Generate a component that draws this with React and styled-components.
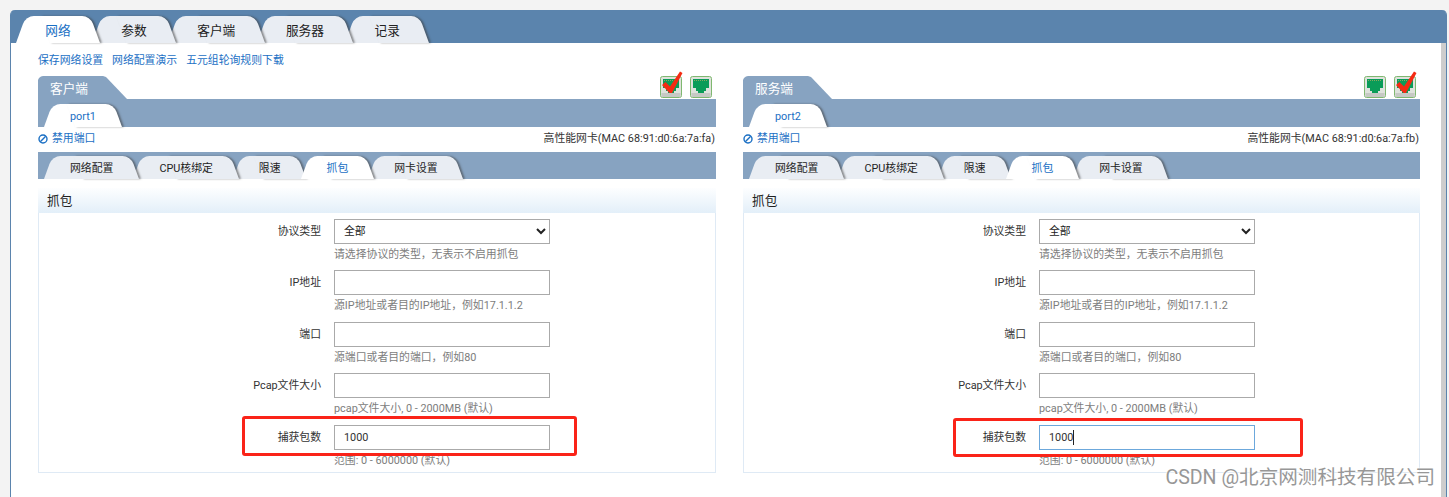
import React from "react";
import styled, { createGlobalStyle } from "styled-components";

const Global = createGlobalStyle`
  html, body { margin: 0; padding: 0; height: 497px; overflow: hidden; background: #f3f3f3; }
  body { font-family: Roboto, "Noto Sans CJK SC", sans-serif; font-size: 10.85px; color: #333; }
  #root { height: 497px; }
`;

const Page = styled.div`
  position: relative;
  height: 497px;
  padding: 10px 2px 0 10px;
  box-sizing: border-box;
  overflow: hidden;
`;
const Card = styled.div`
  display: flex;
  flex-direction: column;
  height: 487px;
  background: #fff;
  border-left: 1px solid #5b84ad;
  border-right: 1px solid #5b84ad;
  border-radius: 5px 5px 0 0;
`;
const MainStrip = styled.div`
  display: flex;
  flex: none;
  align-items: flex-end;
  height: 33px;
  padding-left: 5px;
  background: #5b84ad;
  border-radius: 4px 4px 0 0;
`;
const Body = styled.div`
  display: flex;
  flex: 1;
  min-height: 0;
`;
const ScrollThumb = styled.div`
  width: 5px;
  flex: none;
  background: #cdcdcd;
`;
const Tab = styled.div`
  position: relative;
  height: ${(p) => p.$h}px;
  line-height: ${(p) => p.$h + 2}px;
  padding: 0 ${(p) => p.$pad}px;
  font-size: ${(p) => p.$fs}px;
  color: ${(p) => (p.$active ? "#1a6fc4" : "#222")};
  white-space: nowrap;
  flex: none;
  z-index: ${(p) => (p.$active ? 20 : p.$z)};
  &:not(:first-child) { margin-left: ${(p) => p.$overlap}px; }
  &::before, &::after {
    content: "";
    position: absolute;
    top: 0;
    bottom: 0;
    width: 60%;
    background: ${(p) => (p.$active ? "#fff" : "#e9edf3")};
    transform-origin: bottom;
    z-index: -1;
  }
  &::before {
    left: 0;
    transform: skewX(-20deg);
    border-top-left-radius: 8px;
  }
  &::after {
    right: 0;
    transform: skewX(20deg);
    border-top-right-radius: 8px;
    box-shadow: 2px 0 2px rgba(60, 60, 60, 0.55);
  }
`;
const Content = styled.div`
  flex: 1;
  min-width: 0;
  padding: 0 21px 0 27px;
`;
const LinkRow = styled.div`
  display: flex;
  gap: 9px;
  height: 33px;
  line-height: 35px;
`;
const Link = styled.span`
  color: #1a6fc4;
`;
const Panels = styled.div`
  display: grid;
  grid-template-columns: 678px 677px;
  column-gap: 27px;
`;
const Panel = styled.div`
  min-width: 0;
`;
const PanelTop = styled.div`
  display: flex;
  justify-content: space-between;
  height: 23px;
`;
const PanelTitle = styled.div`
  width: 89px;
  height: 23px;
  box-sizing: border-box;
  padding-left: 12px;
  line-height: 26px;
  font-size: 12.7px;
  color: #fff;
  background: #87a3c1;
  clip-path: polygon(0 4px, 1px 2px, 3px 0.5px, 5px 0, 65px 0, 68px 1px, 89px 23px, 0 23px);
`;
const IconGroup = styled.div`
  display: flex;
  gap: 8px;
  padding-right: 4px;
`;
const PortBar = styled.div`
  display: flex;
  align-items: flex-end;
  height: 28px;
  padding-left: 6px;
  background: #87a3c1;
`;
const InfoRow = styled.div`
  display: flex;
  justify-content: space-between;
  align-items: flex-start;
  height: 25px;
  padding-top: 4px;
  box-sizing: border-box;
  line-height: 16px;
`;
const Disable = styled.span`
  display: flex;
  align-items: center;
  gap: 4px;
  color: #1a6fc4;
`;
const Mac = styled.span`
  color: #333;
  padding-right: 1px;
`;
const SubBar = styled.div`
  display: flex;
  align-items: flex-end;
  height: 27px;
  padding-left: 6px;
  background: #87a3c1;
`;
const Section = styled.div`
  margin-top: 9px;
  height: 285px;
  box-sizing: border-box;
  border: 1px solid #dfeaf5;
  border-top: none;
`;
const SectionHead = styled.div`
  height: 25px;
  margin: 0 -1px;
  padding-left: 9px;
  line-height: 26px;
  font-size: 12.7px;
  color: #222;
  background: linear-gradient(#fdfeff, #e3eff9);
`;
const Form = styled.div`
  padding-top: 5.5px;
`;
const Row = styled.div`
  display: grid;
  grid-template-columns: 282px 216px;
  column-gap: 13px;
  height: 51.5px;
`;
const Label = styled.div`
  text-align: right;
  line-height: 26px;
  color: #333;
`;
const Field = styled.div`
  position: relative;
  min-width: 0;
`;
const Input = styled.input`
  display: block;
  width: 216px;
  height: 25px;
  box-sizing: border-box;
  padding: 1px 9px 0;
  border: 1px solid ${(p) => (p.$focus ? "#6ca8dc" : "#aaa")};
  border-radius: 0;
  outline: none;
  background: #fff;
  font: 10.85px Roboto, "Noto Sans CJK SC", sans-serif;
  color: #333;
`;
const Caret = styled.i`
  position: absolute;
  left: 34px;
  top: 5px;
  width: 1px;
  height: 15px;
  background: #222;
`;
const Select = styled.select`
  display: block;
  width: 216px;
  height: 25px;
  box-sizing: border-box;
  padding: 0 5px;
  border: 1px solid #aaa;
  border-radius: 0;
  outline: none;
  background: #fff;
  font: 10.85px Roboto, "Noto Sans CJK SC", sans-serif;
  color: #222;
`;
const Hint = styled.div`
  line-height: 21px;
  white-space: nowrap;
  color: #7d7d7d;
`;
const RedBox = styled.div`
  position: absolute;
  left: ${(p) => p.$x}px;
  top: ${(p) => p.$y}px;
  width: ${(p) => p.$w}px;
  height: ${(p) => p.$h}px;
  box-sizing: border-box;
  border: 3px solid #fa2318;
  border-radius: 3px;
  pointer-events: none;
`;
const Watermark = styled.div`
  position: absolute;
  right: 14px;
  top: 466px;
  font-size: 19.6px;
  line-height: 24px;
  white-space: nowrap;
  color: #979797;
  text-shadow: 0 0 2px #fff, 0 0 2px #fff;
`;
const IconSvg = styled.svg`
  display: block;
  overflow: visible;
`;

const PortIcon = ({ checked }) => (
  <IconSvg width="22" height="22" viewBox="0 0 22 22">
    <rect x="0.5" y="0.5" width="21" height="21" rx="2" fill="#dfe2dc" stroke="#7fb870" />
    <rect x="1.5" y="17" width="19" height="4" fill="#c6c9c4" />
    <path d="M3 3h16v9h-3v3h-2v2H8v-2H6v-3H3z" fill="#0a9c58" />
    <path d="M4 4.5h14" stroke="#8aa85e" strokeWidth="1.2" strokeDasharray="1 1" />
    {checked && (
      <path d="M2 9L5.5 6 10 10.5 20 -4.5 22.5 -3 12 17 9.5 17z" fill="#f42a12" />
    )}
  </IconSvg>
);
const BanIcon = () => (
  <svg width="10" height="10" viewBox="0 0 10 10">
    <circle cx="5" cy="5" r="4" fill="none" stroke="#1a6fc4" strokeWidth="1.4" />
    <path d="M2.3 7.7L7.7 2.3" stroke="#1a6fc4" strokeWidth="1.4" />
  </svg>
);

const mainTabs = ["网络", "参数", "客户端", "服务器", "记录"];
const subTabs = ["网络配置", "CPU核绑定", "限速", "抓包", "网卡设置"];
const formRows = [
  { label: "协议类型", hint: "请选择协议的类型，无表示不启用抓包", select: true },
  { label: "IP地址", hint: "源IP地址或者目的IP地址，例如17.1.1.2" },
  { label: "端口", hint: "源端口或者目的端口，例如80" },
  { label: "Pcap文件大小", hint: "pcap文件大小, 0 - 2000MB (默认)" },
  { label: "捕获包数", hint: "范围: 0 - 6000000 (默认)", value: "1000" },
];

const PortPanel = ({ title, port, mac, iconsChecked, focus }) => (
  <Panel>
    <PanelTop>
      <PanelTitle>{title}</PanelTitle>
      <IconGroup>
        {iconsChecked.map((c, i) => (
          <PortIcon key={i} checked={c} />
        ))}
      </IconGroup>
    </PanelTop>
    <PortBar>
      <Tab $active $h={23} $pad={26} $fs={10.85} $z={1}>{port}</Tab>
    </PortBar>
    <InfoRow>
      <Disable><BanIcon />禁用端口</Disable>
      <Mac>高性能网卡(MAC {mac})</Mac>
    </InfoRow>
    <SubBar>
      {subTabs.map((t, i) => (
        <Tab key={t} $active={t === "抓包"} $h={23} $pad={26} $fs={10.85} $overlap={-6} $z={10 - i}>{t}</Tab>
      ))}
    </SubBar>
    <Section>
      <SectionHead>抓包</SectionHead>
      <Form>
        {formRows.map((r) => (
          <Row key={r.label}>
            <Label>{r.label}</Label>
            <Field>
              {r.select ? (
                <Select defaultValue="全部"><option>全部</option></Select>
              ) : (
                <Input readOnly value={r.value || ""} $focus={focus && !!r.value} />
              )}
              {focus && r.value && <Caret />}
              <Hint>{r.hint}</Hint>
            </Field>
          </Row>
        ))}
      </Form>
    </Section>
  </Panel>
);

export default function App() {
  return (
    <>
      <Global />
      <Page>
        <Card>
          <MainStrip>
            {mainTabs.map((t, i) => (
              <Tab key={t} $active={i === 0} $h={27} $pad={29.3} $fs={12.7} $overlap={-8} $z={10 - i}>{t}</Tab>
            ))}
          </MainStrip>
          <Body>
            <Content>
              <LinkRow>
                <Link>保存网络设置</Link>
                <Link>网络配置演示</Link>
                <Link>五元组轮询规则下载</Link>
              </LinkRow>
              <Panels>
                <PortPanel title="客户端" port="port1" mac="68:91:d0:6a:7a:fa" iconsChecked={[true, false]} />
                <PortPanel title="服务端" port="port2" mac="68:91:d0:6a:7a:fb" iconsChecked={[false, true]} focus />
              </Panels>
            </Content>
            <ScrollThumb />
          </Body>
        </Card>
        <RedBox $x={241.5} $y={416} $w={335} $h={40} />
        <RedBox $x={953} $y={418} $w={350} $h={39} />
        <Watermark>CSDN @北京网测科技有限公司</Watermark>
      </Page>
    </>
  );
}
